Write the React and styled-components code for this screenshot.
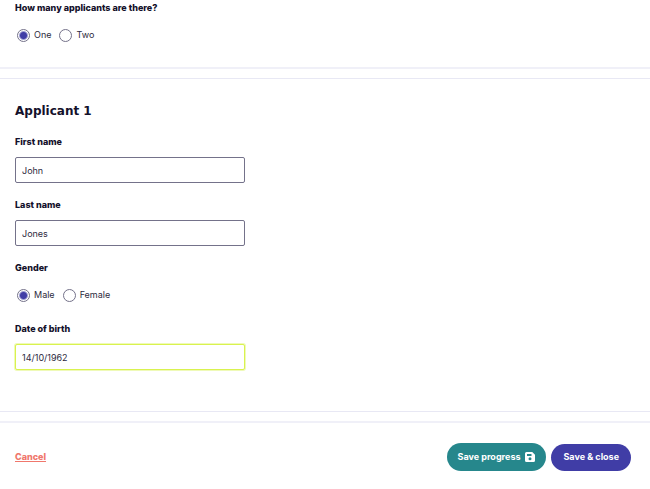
import React, { useState } from 'react';
import styled, { createGlobalStyle } from 'styled-components';

const GlobalStyle = createGlobalStyle`
  * {
    box-sizing: border-box;
  }

  body {
    margin: 0;
    background: #ffffff;
    color: #14112b;
    font-family: Inter, 'Liberation Sans', sans-serif;
    font-size: 9px;
    line-height: 14px;
  }
`;

const Form = styled.form`
  display: flex;
  flex-direction: column;
  gap: 9px;
`;

const Section = styled.section`
  display: flex;
  flex-direction: column;
  gap: 15px;
  padding: ${props => props.$first ? '1px 15px 20px' : '23px 15px 41px'};
  border-top: ${props => props.$first ? 'none' : '1px solid #e8e8f4'};
  border-bottom: ${props => props.$first ? '2px solid #f0f0f8' : '1px solid #e8e8f4'};
`;

const SectionTitle = styled.h2`
  margin: 0;
  font-family: 'DejaVu Sans', sans-serif;
  font-size: 12px;
  font-weight: 700;
  line-height: 18px;
`;

const Field = styled.div`
  display: flex;
  flex-direction: column;
  gap: 8px;
`;

const Label = styled.label`
  font-weight: 800;
`;

const TextInput = styled.input`
  width: 100%;
  max-width: 230px;
  height: 26px;
  padding: 0 6px;
  border: 1px solid ${props => props.$highlight ? '#d9f24f' : '#74728a'};
  border-radius: 2px;
  outline: none;
  box-shadow: ${props => props.$highlight ? '0 0 0 1px #effab8' : 'none'};
  background: #ffffff;
  color: #2d2a40;
  font: inherit;
`;

const RadioGroup = styled.fieldset`
  min-width: 0;
  margin: 0;
  padding: 0;
  border: none;
`;

const Legend = styled.legend`
  margin-bottom: 8px;
  padding: 0;
  font-weight: 800;
`;

const Options = styled.div`
  display: flex;
  align-items: center;
  gap: 8px;
  height: 24px;
  padding-left: 2px;
`;

const Option = styled.label`
  display: flex;
  align-items: center;
  gap: 4px;
  color: #2d2a40;
`;

const Radio = styled.input`
  appearance: none;
  width: 13px;
  height: 13px;
  margin: 0;
  border: 1px solid #74728a;
  border-radius: 50%;
  background: #ffffff;

  &:checked {
    background: radial-gradient(circle, #403da6 3px, #ffffff 5px);
  }
`;

const Footer = styled.footer`
  display: flex;
  align-items: center;
  justify-content: space-between;
  padding: 20px 19px 18px 15px;
  border-top: 2px solid #f0f0f8;
`;

const CancelLink = styled.a`
  color: #f0776c;
  font-weight: 800;
  text-decoration: underline;
`;

const Actions = styled.div`
  display: flex;
  align-items: center;
  gap: 5px;
`;

const Button = styled.button`
  display: flex;
  align-items: center;
  gap: 5px;
  height: ${props => props.$primary ? '27px' : '28px'};
  padding: 0 ${props => props.$primary ? '12px' : '11px'};
  border: none;
  border-radius: 14px;
  background: ${props => props.$primary ? '#403da6' : '#26878c'};
  color: #ffffff;
  font: inherit;
  font-weight: 700;
  white-space: nowrap;
  cursor: pointer;
`;

const SaveIcon = () => (
  <svg width="10" height="10" viewBox="0 0 20 20" aria-hidden="true">
    <path
      fill="currentColor"
      fillRule="evenodd"
      d="M3 0h11.500L20 5.500V17a3 3 0 0 1-3 3H3a3 3 0 0 1-3-3V3a3 3 0 0 1 3-3zM4 4v4h9V4zM10 10.500a3 3 0 1 0 0 6 3 3 0 0 0 0-6z"
    />
  </svg>
);

const RadioField = ({ legend, name, options, value, onChange }) => (
  <RadioGroup>
    <Legend>{legend}</Legend>
    <Options>
      {options.map((option) => (
        <Option key={option}>
          <Radio
            type="radio"
            name={name}
            value={option}
            checked={value === option}
            onChange={() => onChange(option)}
          />
          {option}
        </Option>
      ))}
    </Options>
  </RadioGroup>
);

const TextField = ({ id, label, value, onChange, highlight = false }) => (
  <Field>
    <Label htmlFor={id}>{label}</Label>
    <TextInput
      id={id}
      type="text"
      value={value}
      $highlight={highlight}
      onChange={(e) => onChange(e.target.value)}
    />
  </Field>
);

const App = () => {
  const [count, setCount] = useState('One');
  const [applicant, setApplicant] = useState({
    firstName: 'John',
    lastName: 'Jones',
    gender: 'Male',
    dateOfBirth: '14/10/1962',
  });

  const update = (key) => (value) => setApplicant({ ...applicant, [key]: value });

  return (
    <>
      <GlobalStyle />
      <Form onSubmit={(e) => e.preventDefault()}>
        <Section $first>
          <RadioField
            legend="How many applicants are there?"
            name="count"
            options={['One', 'Two']}
            value={count}
            onChange={setCount}
          />
        </Section>

        <Section>
          <SectionTitle>Applicant 1</SectionTitle>
          <TextField
            id="firstName"
            label="First name"
            value={applicant.firstName}
            onChange={update('firstName')}
          />
          <TextField
            id="lastName"
            label="Last name"
            value={applicant.lastName}
            onChange={update('lastName')}
          />
          <RadioField
            legend="Gender"
            name="gender"
            options={['Male', 'Female']}
            value={applicant.gender}
            onChange={update('gender')}
          />
          <TextField
            id="dateOfBirth"
            label="Date of birth"
            value={applicant.dateOfBirth}
            onChange={update('dateOfBirth')}
            highlight
          />
        </Section>

        <Footer>
          <CancelLink href="#cancel">Cancel</CancelLink>
          <Actions>
            <Button type="button">
              Save progress
              <SaveIcon />
            </Button>
            <Button type="submit" $primary>Save &amp; close</Button>
          </Actions>
        </Footer>
      </Form>
    </>
  );
};

export default App;
